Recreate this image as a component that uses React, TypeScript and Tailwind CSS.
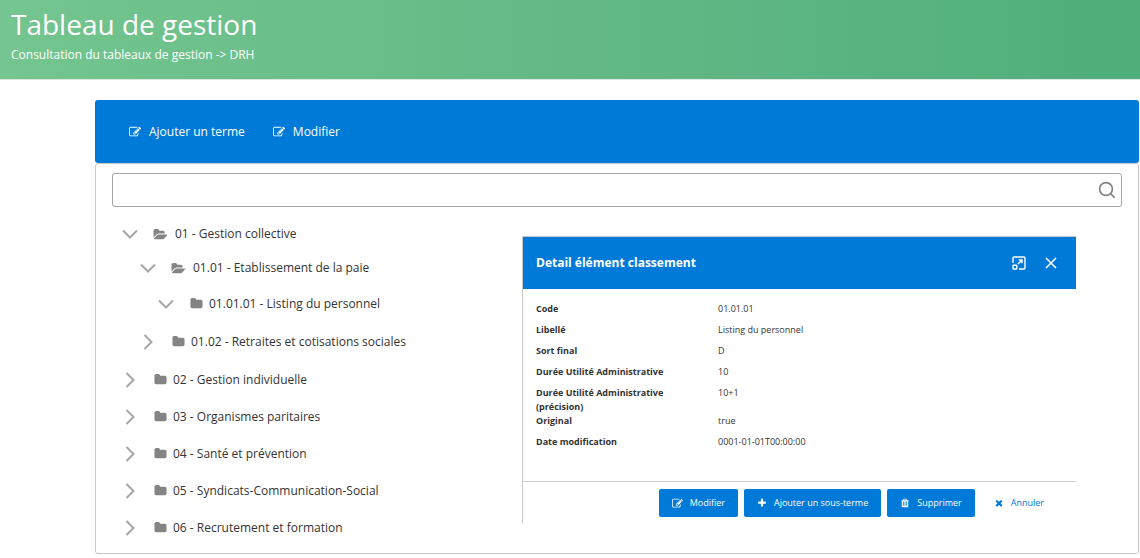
import { useState } from "react";

const PATHS = {
  edit: "M888 1184l116-116-152-152-116 116v56h96v96h56zm440-720q-16-16-33 1l-350 350q-17 17-1 33t33-1l350-350q17-17 1-33zm80 594v190q0 119-84.5 203.5t-203.5 84.5h-832q-119 0-203.5-84.5t-84.5-203.5v-832q0-119 84.5-203.5t203.5-84.5h832q63 0 117 25 15 7 18 23 3 17-9 29l-49 49q-14 14-32 8-23-6-45-6h-832q-66 0-113 47t-47 113v832q0 66 47 113t113 47h832q66 0 113-47t47-113v-126q0-13 9-22l64-64q15-15 35-7t20 29zm-96-738l288 288-672 672h-288v-288zm444 132l-92 92-288-288 92-92q28-28 68-28t68 28l152 152q28 28 28 68t-28 68z",
  folder: "M1728 608v704q0 92-66 158t-158 66h-1216q-92 0-158-66t-66-158v-960q0-92 66-158t158-66h320q92 0 158 66t66 158v32h672q92 0 158 66t66 158z",
  folderOpen: "M1815 952q0 31-31 66l-336 396q-43 51-120.5 86.5t-143.5 35.5h-1088q-34 0-60.5-13t-26.5-43q0-31 31-66l336-396q43-51 120.5-86.5t143.5-35.5h1088q34 0 60.5 13t26.5 43zm-343-344v160h-832q-94 0-197 47.5t-164 119.5l-337 396-5 6q0-4-.5-12.5t-.5-12.5v-960q0-92 66-158t158-66h320q92 0 158 66t66 158v32h544q92 0 158 66t66 158z",
  plus: "M1600 736v192q0 40-28 68t-68 28h-416v416q0 40-28 68t-68 28h-192q-40 0-68-28t-28-68v-416h-416q-40 0-68-28t-28-68v-192q0-40 28-68t68-28h416v-416q0-40 28-68t68-28h192q40 0 68 28t28 68v416h416q40 0 68 28t28 68z",
  trash: "M704 1376v-704q0-14-9-23t-23-9h-64q-14 0-23 9t-9 23v704q0 14 9 23t23 9h64q14 0 23-9t9-23zm256 0v-704q0-14-9-23t-23-9h-64q-14 0-23 9t-9 23v704q0 14 9 23t23 9h64q14 0 23-9t9-23zm256 0v-704q0-14-9-23t-23-9h-64q-14 0-23 9t-9 23v704q0 14 9 23t23 9h64q14 0 23-9t9-23zm-544-992h448l-48-117q-7-9-17-11h-317q-10 2-17 11zm928 32v64q0 14-9 23t-23 9h-96v948q0 83-47 143.5t-113 60.5h-832q-66 0-113-58.5t-47-141.5v-952h-96q-14 0-23-9t-9-23v-64q0-14 9-23t23-9h309l70-167q15-37 54-63t79-26h320q40 0 79 26t54 63l70 167h309q14 0 23 9t9 23z",
  times: "M1490 1322q0 40-28 68l-136 136q-28 28-68 28t-68-28l-294-294-294 294q-28 28-68 28t-68-28l-136-136q-28-28-28-68t28-68l294-294-294-294q-28-28-28-68t28-68l136-136q28-28 68-28t68 28l294 294 294-294q28-28 68-28t68 28l136 136q28 28 28 68t-28 68l-294 294 294 294q28 28 28 68z",
};

function Icon({ name, className }: { name: keyof typeof PATHS; className: string }) {
  return (
    <svg viewBox="0 0 1792 1792" fill="currentColor" aria-hidden="true" className={className}>
      <path d={PATHS[name]} />
    </svg>
  );
}

interface Term {
  label: string;
  open?: boolean;
  children?: Term[];
}

const TERMS: Term[] = [
  {
    label: "01 - Gestion collective",
    open: true,
    children: [
      {
        label: "01.01 - Etablissement de la paie",
        open: true,
        children: [{ label: "01.01.01 - Listing du personnel", open: true }],
      },
      { label: "01.02 - Retraites et cotisations sociales" },
    ],
  },
  { label: "02 - Gestion individuelle" },
  { label: "03 - Organismes paritaires" },
  { label: "04 - Santé et prévention" },
  { label: "05 - Syndicats-Communication-Social" },
  { label: "06 - Recrutement et formation" },
];

const DETAILS = [
  ["Code", "01.01.01"],
  ["Libellé", "Listing du personnel"],
  ["Sort final", "D"],
  ["Durée Utilité Administrative", "10"],
  ["Durée Utilité Administrative (précision)", "10+1"],
  ["Original", "true"],
  ["Date modification", "0001-01-01T00:00:00"],
];

function TreeNode({ term }: { term: Term }) {
  const [open, setOpen] = useState(!!term.open);
  const expanded = open && !!term.children;

  return (
    <li>
      <div className={`flex items-center ${expanded ? "h-[34px]" : "h-[37px]"}`}>
        <button
          aria-label={open ? "Replier" : "Déplier"}
          onClick={() => setOpen(!open)}
          className="w-9 h-6 shrink-0 flex items-center justify-center text-[#a6a6a6]"
        >
          <svg viewBox="0 0 16 16" fill="none" stroke="currentColor" strokeWidth="2" className="w-4 h-4">
            <path d={open ? "M1 4.5l7 7 7-7" : "M4.5 1l7 7-7 7"} />
          </svg>
        </button>
        <Icon
          name={expanded ? "folderOpen" : "folder"}
          className={`w-[13px] h-[13px] ml-1.5 shrink-0 overflow-visible text-[#848484] ${expanded ? "mr-2" : "mr-1.5"}`}
        />
        <span className="whitespace-nowrap">{term.label}</span>
      </div>
      {expanded && (
        <ul className="pl-[18px] pb-px">
          {term.children!.map((child) => (
            <TreeNode key={child.label} term={child} />
          ))}
        </ul>
      )}
    </li>
  );
}

function DetailDialog() {
  return (
    <section
      role="dialog"
      aria-labelledby="detail-title"
      className="flex-1 mt-[19px] mr-[46px] border-t border-l border-[#c8c8c8] bg-white text-[9px] leading-[14px]"
    >
      <header className="h-[52px] bg-[#007ad9] text-white flex items-center pl-[13px] pr-[18px]">
        <h2 id="detail-title" className="flex-1 text-[12px] font-bold">Detail élément classement</h2>
        <button aria-label="Agrandir" className="mr-[18px]">
          <svg viewBox="0 0 14 14" fill="none" stroke="currentColor" strokeWidth="1.4" className="w-3.5 h-3.5">
            <path d="M1 7V2q0-1 1-1h10q1 0 1 1v10q0 1-1 1H7" />
            <rect x="1" y="9.2" width="3.8" height="3.8" rx="0.6" />
            <path d="M6 8l4-4M6.8 4H10v3.2" />
          </svg>
        </button>
        <button aria-label="Fermer">
          <svg viewBox="0 0 14 14" fill="none" stroke="currentColor" strokeWidth="1.5" className="w-3.5 h-3.5">
            <path d="M2 2l10 10M12 2L2 12" />
          </svg>
        </button>
      </header>

      <dl className="px-[13px] pt-[13px] pb-[25px] text-[#333333]">
        {DETAILS.map(([label, value]) => (
          <div key={label} className="flex min-h-[21px]">
            <dt className="w-[142px] mr-10 font-bold">{label}</dt>
            <dd>{value}</dd>
          </div>
        ))}
      </dl>

      <footer className="border-t border-[#d2d2d2] pt-[7px] pb-1.5 pr-[19px] flex justify-end gap-1.5">
        <button className="h-7 px-[13px] rounded-xs bg-[#007ad9] text-white flex items-center gap-[7px]">
          <Icon name="edit" className="w-[11px] h-[11px]" />
          Modifier
        </button>
        <button className="h-7 px-[13px] rounded-xs bg-[#007ad9] text-white flex items-center gap-[7px]">
          <Icon name="plus" className="w-[10px] h-[10px]" />
          Ajouter un sous-terme
        </button>
        <button className="h-7 px-[13px] rounded-xs bg-[#007ad9] text-white flex items-center gap-[7px]">
          <Icon name="trash" className="w-[10px] h-[10px]" />
          Supprimer
        </button>
        <button className="h-7 px-[13px] text-[#007ad9] flex items-center gap-[7px]">
          <Icon name="times" className="w-[10px] h-[10px]" />
          Annuler
        </button>
      </footer>
    </section>
  );
}

export default function App() {
  const [query, setQuery] = useState("");

  return (
    <div className="bg-white text-[12px] leading-4 text-[#333333] font-['Open_Sans','Noto_Sans',sans-serif]">
      <header className="h-20 pl-[11px] pt-1.5 border-b border-[#dfe5e1] bg-linear-to-r from-[#74c58f] to-[#50ae7c] text-white">
        <h1 className="text-[28px] leading-9">Tableau de gestion</h1>
        <p className="mt-[5px]">Consultation du tableaux de gestion -&gt; DRH</p>
      </header>

      <main className="mt-5 ml-[95px] mr-px">
        <div className="h-[63px] px-[34px] rounded-[3px] bg-[#007ad9] text-white flex items-center gap-7">
          <button className="flex items-center gap-2">
            <Icon name="edit" className="w-3 h-3" />
            Ajouter un terme
          </button>
          <button className="flex items-center gap-2">
            <Icon name="edit" className="w-3 h-3" />
            Modifier
          </button>
        </div>

        <div className="border border-[#c8c8c8] rounded-[3px] px-4 pt-[9px] pb-[7px]">
          <div className="h-[34px] border border-[#a6a6a6] rounded-[3px] flex items-center pr-[5px]">
            <input
              type="text"
              aria-label="Rechercher"
              value={query}
              onChange={(e) => setQuery(e.target.value)}
              className="flex-1 h-full px-2 outline-none"
            />
            <svg viewBox="0 0 18 18" fill="none" stroke="#848484" strokeWidth="1.7" aria-hidden="true" className="w-[18px] h-[18px]">
              <circle cx="8" cy="8" r="6.4" />
              <path d="M12.6 12.6l4.2 4.2" />
            </svg>
          </div>

          <div className="flex items-start mt-[10px]">
            <ul className="w-[410px] shrink-0">
              {TERMS.map((term) => (
                <TreeNode key={term.label} term={term} />
              ))}
            </ul>
            <DetailDialog />
          </div>
        </div>
      </main>
    </div>
  );
}
